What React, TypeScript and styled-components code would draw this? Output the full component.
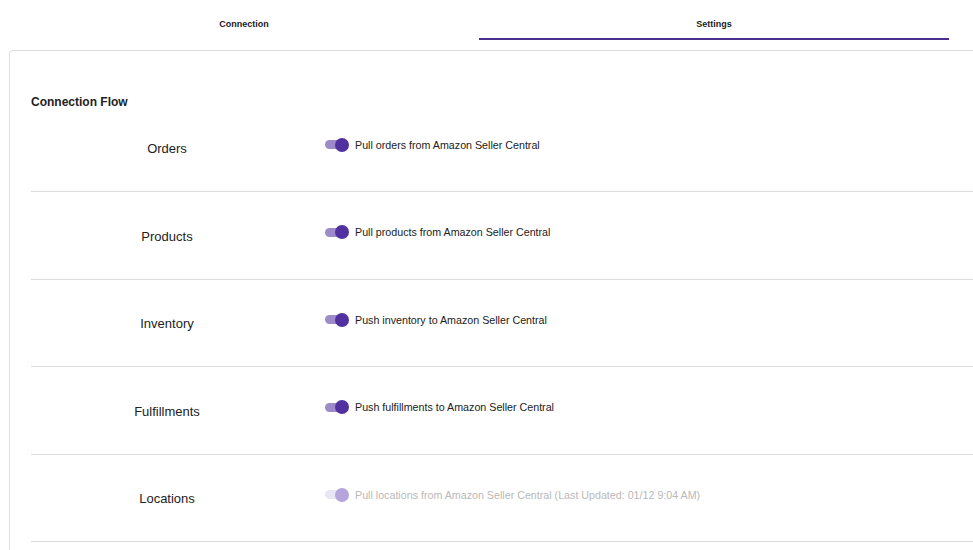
import React from "react";
import styled, { createGlobalStyle } from "styled-components";

type Flow = {
	label: string;
	text: string;
	disabled?: boolean;
};

const flows: Flow[] = [
	{ label: "Orders", text: "Pull orders from Amazon Seller Central" },
	{ label: "Products", text: "Pull products from Amazon Seller Central" },
	{ label: "Inventory", text: "Push inventory to Amazon Seller Central" },
	{ label: "Fulfillments", text: "Push fulfillments to Amazon Seller Central" },
	{
		label: "Locations",
		text: "Pull locations from Amazon Seller Central (Last Updated: 01/12 9:04 AM)",
		disabled: true,
	},
];

const GlobalStyle = createGlobalStyle`
	body {
		margin: 0;
		background: #fff;
		font-family: "Liberation Sans", Arial, sans-serif;
		color: #222;
		overflow: hidden;
	}
`;

export default function App() {
	return (
		<>
			<GlobalStyle />
			<Page>
				<Tabs>
					<Tab active={false}>Connection</Tab>
					<Tab active>Settings</Tab>
				</Tabs>
				<Card>
					<Heading>Connection Flow</Heading>
					{flows.map(f => (
						<Row key={f.label}>
							<RowLabel>{f.label}</RowLabel>
							<ToggleCell>
								<Switch disabled={f.disabled}>
									<Thumb disabled={f.disabled} />
								</Switch>
								<ToggleText disabled={f.disabled}>{f.text}</ToggleText>
							</ToggleCell>
						</Row>
					))}
				</Card>
			</Page>
		</>
	);
}

const Page = styled.div`
	width: 100%;
	height: 550px;
	overflow: hidden;
`;

const Tabs = styled.div`
	display: flex;
	padding-left: 9px;
	width: 940px;
`;

const Tab = styled.div<{ active?: boolean }>`
	flex: 1;
	height: 40px;
	box-sizing: border-box;
	display: flex;
	justify-content: center;
	padding-top: 19px;
	font-size: 9px;
	font-weight: 700;
	color: #222;
	border-bottom: 2px solid ${p => (p.active ? "#4b2f8e" : "transparent")};
`;

const Card = styled.div`
	margin: 10px -30px 0 9px;
	border: 1px solid #dedede;
	border-radius: 4px;
	padding: 44px 0 40px 21px;
`;

const Heading = styled.div`
	font-size: 12px;
	font-weight: 700;
	line-height: 14px;
	margin-bottom: -4.5px;
`;

const Row = styled.div`
	display: grid;
	grid-template-columns: 272px 1fr;
	height: 87.5px;
	box-sizing: border-box;
	border-bottom: 1px solid #dcdcdc;
	align-items: center;
`;

const RowLabel = styled.div`
	text-align: center;
	font-size: 13px;
	padding-top: 2px;
`;

const ToggleCell = styled.div`
	display: flex;
	align-items: center;
	gap: 8px;
	padding-left: 22px;
	padding-bottom: 6px;
`;

const Switch = styled.div<{ disabled?: boolean }>`
	position: relative;
	width: 22px;
	height: 9px;
	border-radius: 5px;
	background: ${p => (p.disabled ? "#e9e6f3" : "#9d8bc9")};
`;

const Thumb = styled.div<{ disabled?: boolean }>`
	position: absolute;
	right: -2px;
	top: -2.5px;
	width: 14px;
	height: 14px;
	border-radius: 50%;
	background: ${p => (p.disabled ? "#b4a5db" : "#52309f")};
`;

const ToggleText = styled.span<{ disabled?: boolean }>`
	font-size: 10.7px;
	color: ${p => (p.disabled ? "#b9b9b9" : "#222")};
`;
